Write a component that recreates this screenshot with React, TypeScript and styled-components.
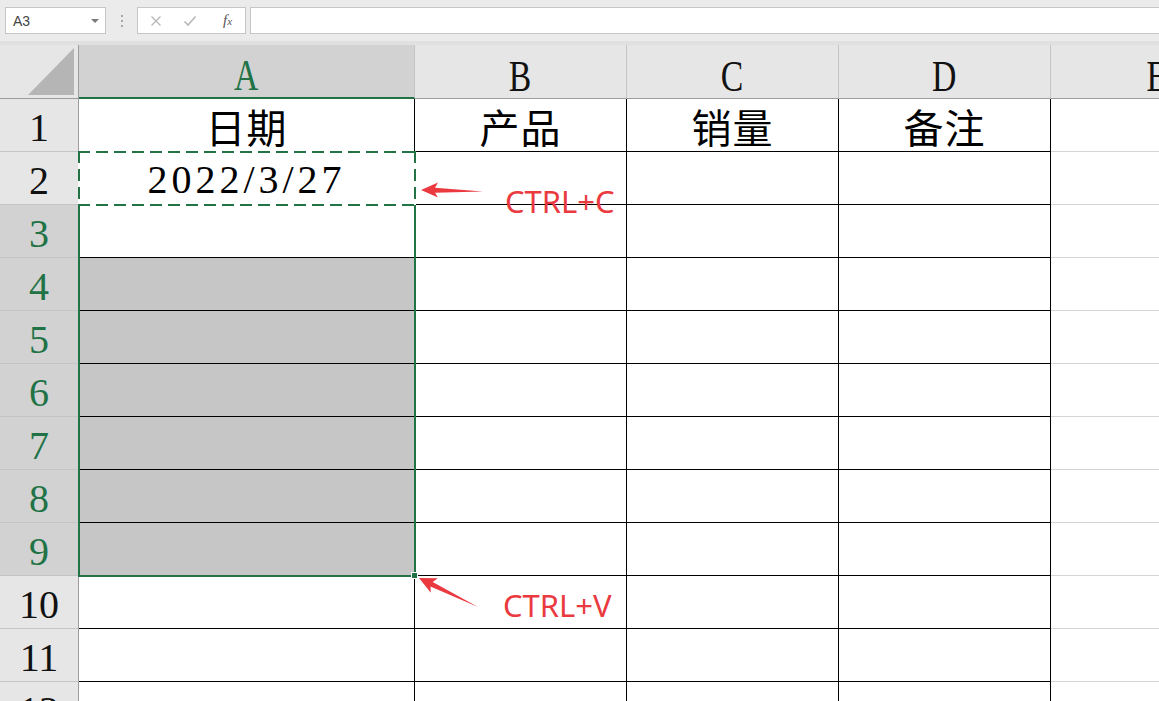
import React from 'react';
import styled, { createGlobalStyle, css } from 'styled-components';

const GREEN = '#217346';
const COL_WIDTHS = [79, 336, 212, 212, 212, 212];
const HEAD_H = 54;
const ROW_H = 53;
const LETTERS = ['A', 'B', 'C', 'D', 'E'];
const ROW_COUNT = 12;
const SELECTED_ROWS = [3, 4, 5, 6, 7, 8, 9];

const data: Record<string, string> = {
  A1: '日期',
  B1: '产品',
  C1: '销量',
  D1: '备注',
  A2: '2022/3/27',
};

const GlobalStyle = createGlobalStyle`
  html, body {
    margin: 0;
    padding: 0;
    width: 1159px;
    height: 701px;
    overflow: hidden;
    background: #fff;
  }
  body {
    font-family: "Liberation Sans", "Noto Sans CJK SC", sans-serif;
  }
`;

const Page = styled.div`
  position: relative;
  width: 1159px;
  height: 701px;
  overflow: hidden;
  display: flex;
  flex-direction: column;
`;

/* ---------- formula bar ---------- */

const Toolbar = styled.div`
  flex: none;
  height: 45px;
  box-sizing: border-box;
  background: #ebebeb;
  border-bottom: 4px solid #e0e0e0;
  display: flex;
  align-items: flex-start;
  padding: 7px 0 0 5px;
`;

const NameBox = styled.div`
  width: 101px;
  height: 27px;
  box-sizing: border-box;
  background: #fff;
  border: 1px solid #c6c6c6;
  display: flex;
  align-items: center;
  justify-content: space-between;
  padding: 0 6px 0 7px;
  font-size: 14px;
  color: #444;
`;

const Caret = styled.span`
  width: 0;
  height: 0;
  border-left: 4px solid transparent;
  border-right: 4px solid transparent;
  border-top: 4px solid #7a7a7a;
`;

const Grip = styled.div`
  width: 31px;
  height: 27px;
  display: flex;
  flex-direction: column;
  align-items: center;
  justify-content: center;
  gap: 3px;
  span {
    width: 2px;
    height: 2px;
    background: #a8a8a8;
  }
`;

const FormulaTools = styled.div`
  width: 109px;
  height: 27px;
  box-sizing: border-box;
  background: #fff;
  border: 1px solid #c6c6c6;
  display: flex;
  align-items: center;
  padding-left: 12px;
  gap: 21px;
`;

const Fx = styled.span`
  font-family: "Liberation Serif", serif;
  font-style: italic;
  font-size: 15px;
  color: #555;
  margin-left: 5px;
  sub {
    font-size: 11px;
    vertical-align: baseline;
  }
`;

const FormulaInput = styled.div`
  flex: 1;
  height: 27px;
  margin-left: 4px;
  box-sizing: border-box;
  background: #fff;
  border: 1px solid #c6c6c6;
  border-right: none;
`;

/* ---------- sheet ---------- */

const Sheet = styled.div`
  position: relative;
  display: grid;
  grid-template-columns: ${COL_WIDTHS.map((w) => `${w}px`).join(' ')};
  grid-template-rows: ${HEAD_H}px;
  grid-auto-rows: ${ROW_H}px;
  width: max-content;
`;

const headerBase = css`
  box-sizing: border-box;
  background: #e6e6e6;
  display: flex;
  align-items: center;
  justify-content: center;
  font-family: "Liberation Serif", serif;
  color: #111;
`;

const Corner = styled.div`
  ${headerBase};
  position: relative;
  border-right: 1px solid #9c9c9c;
  border-bottom: 1px solid #9c9c9c;
  &::after {
    content: '';
    position: absolute;
    right: 4px;
    bottom: 3px;
    width: 46px;
    height: 47px;
    background: #b5b5b5;
    clip-path: polygon(100% 0, 100% 100%, 0 100%);
  }
`;

const ColHeader = styled.div<{ $active?: boolean }>`
  ${headerBase};
  padding-top: 8px;
  border-right: 1px solid #c4c4c4;
  border-bottom: 1px solid #9c9c9c;
  font-size: 45px;
  ${(p) =>
    p.$active &&
    css`
      background: #d2d2d2;
      color: ${GREEN};
      border-bottom: 2px solid ${GREEN};
    `}
`;

const Letter = styled.span`
  display: inline-block;
  transform: scaleX(0.75);
`;

const RowHeader = styled.div<{ $active?: boolean }>`
  ${headerBase};
  padding-top: 4px;
  border-right: 1px solid #9c9c9c;
  border-bottom: 1px solid #c4c4c4;
  font-size: 40px;
  ${(p) =>
    p.$active &&
    css`
      background: #d2d2d2;
      color: ${GREEN};
    `}
`;

const Cell = styled.div<{ $framed: boolean; $picked?: boolean; $spaced?: boolean }>`
  box-sizing: border-box;
  display: flex;
  align-items: center;
  justify-content: center;
  padding-top: 2px;
  font-family: "Liberation Serif", "Noto Sans CJK SC", serif;
  font-size: 40px;
  color: #000;
  white-space: nowrap;
  background: ${(p) => (p.$picked ? '#c6c6c6' : '#fff')};
  border-right: 1px solid ${(p) => (p.$framed ? '#000' : '#d4d4d4')};
  border-bottom: 1px solid ${(p) => (p.$framed ? '#000' : '#d4d4d4')};
  letter-spacing: ${(p) => (p.$spaced ? '4px' : '1px')};
`;

const dash = (dir: string) =>
  `repeating-linear-gradient(${dir}, ${GREEN} 0 12px, transparent 12px 18px)`;

/* overlays are placed from the grid geometry */
const A_LEFT = COL_WIDTHS[0] - 1;
const A_WIDTH = COL_WIDTHS[1] + 2;
const rowTop = (r: number) => HEAD_H + (r - 1) * ROW_H - 1;

const Marquee = styled.div`
  position: absolute;
  left: ${A_LEFT}px;
  top: ${rowTop(2)}px;
  width: ${A_WIDTH}px;
  height: ${ROW_H + 2}px;
  pointer-events: none;
  background:
    ${dash('90deg')} left top / 100% 2px no-repeat,
    ${dash('90deg')} left bottom / 100% 2px no-repeat,
    ${dash('180deg')} left top / 2px 100% no-repeat,
    ${dash('180deg')} right top / 2px 100% no-repeat,
    linear-gradient(#fff, #fff) left top / 100% 2px no-repeat,
    linear-gradient(#fff, #fff) left bottom / 100% 2px no-repeat,
    linear-gradient(#fff, #fff) left top / 2px 100% no-repeat,
    linear-gradient(#fff, #fff) right top / 2px 100% no-repeat;
`;

const Selection = styled.div`
  position: absolute;
  left: ${A_LEFT}px;
  top: ${rowTop(3) + 1}px;
  width: ${A_WIDTH}px;
  height: ${ROW_H * 7 + 1}px;
  box-sizing: border-box;
  border: 2px solid ${GREEN};
  border-top: none;
  pointer-events: none;
`;

const FillHandle = styled.div`
  position: absolute;
  left: ${A_LEFT + A_WIDTH - 5}px;
  top: ${rowTop(10) - 3}px;
  width: 7px;
  height: 7px;
  box-sizing: border-box;
  background: ${GREEN};
  border: 1px solid #fff;
`;

/* ---------- annotations ---------- */

const Arrows = styled.svg`
  position: absolute;
  left: 0;
  top: 0;
  pointer-events: none;
`;

const Note = styled.span<{ $x: number; $y: number }>`
  position: absolute;
  left: ${(p) => p.$x}px;
  top: ${(p) => p.$y}px;
  font-family: "Noto Sans", "Liberation Sans", sans-serif;
  font-size: 31px;
  line-height: 31px;
  color: #ea3a40;
  white-space: nowrap;
`;

const App: React.FC = () => {
  const rows = Array.from({ length: ROW_COUNT }, (_, i) => i + 1);
  return (
    <Page>
      <GlobalStyle />
      <Toolbar>
        <NameBox>
          <span>A3</span>
          <Caret />
        </NameBox>
        <Grip>
          <span />
          <span />
          <span />
        </Grip>
        <FormulaTools>
          <svg width="12" height="12" viewBox="0 0 12 12">
            <path d="M1.5 1.5 L10.5 10.5 M10.5 1.5 L1.5 10.5" stroke="#b9b9b9" strokeWidth="1.4" fill="none" />
          </svg>
          <svg width="14" height="12" viewBox="0 0 14 12">
            <path d="M1.5 6.5 L5 10 L12.5 1.5" stroke="#b9b9b9" strokeWidth="1.6" fill="none" />
          </svg>
          <Fx>
            f<sub>x</sub>
          </Fx>
        </FormulaTools>
        <FormulaInput />
      </Toolbar>

      <Sheet>
        <Corner />
        {LETTERS.map((l, i) => (
          <ColHeader key={l} $active={i === 0}>
            <Letter>{l}</Letter>
          </ColHeader>
        ))}
        {rows.map((r) => (
          <React.Fragment key={r}>
            <RowHeader $active={SELECTED_ROWS.includes(r)}>{r}</RowHeader>
            {LETTERS.map((l, ci) => {
              const ref = `${l}${r}`;
              return (
                <Cell
                  key={ref}
                  $framed={ci < 4}
                  $picked={ci === 0 && r >= 4 && r <= 9}
                  $spaced={ref === 'A2'}
                >
                  {data[ref]}
                </Cell>
              );
            })}
          </React.Fragment>
        ))}
        <Marquee />
        <Selection />
        <FillHandle />
      </Sheet>

      <Arrows width="1159" height="701" viewBox="0 0 1159 701">
        <polygon
          points="421,190 438,182.5 435,187.8 483,191.5 435,192.8 438,197.5"
          fill="#ea3a40"
        />
        <polygon
          points="419,578 437.8,578.3 432.7,582 478,607 430.5,586.4 430.8,592.7"
          fill="#ea3a40"
        />
      </Arrows>
      <Note $x={505} $y={186}>CTRL+C</Note>
      <Note $x={503} $y={590}>CTRL+V</Note>
    </Page>
  );
};

export default App;
